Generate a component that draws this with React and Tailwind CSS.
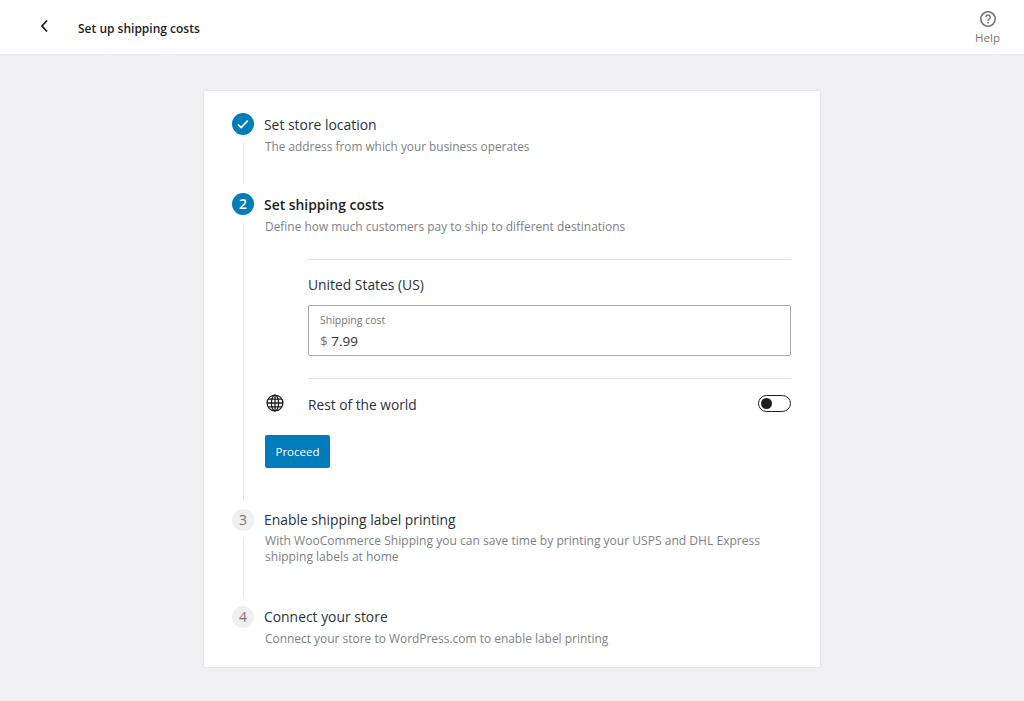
function Circle({ kind, children }) {
  const cls = kind === "active"
    ? "bg-[#007cba] text-white font-semibold"
    : "bg-[#f0f0f1] text-[#757575]";
  return (
    <div className={"flex h-[22px] w-[22px] shrink-0 items-center justify-center rounded-full text-[14px] leading-none " + cls}>
      {children}
    </div>
  );
}

function Step({ circle, kind, title, bold, desc, size, line = true, children, pt = "", pb = "pb-[40px]" }) {
  return (
    <div className="flex gap-[10px]">
      <div className="flex w-[22px] shrink-0 flex-col items-center">
        <Circle kind={kind}>{circle}</Circle>
        {line && <div className="mb-[9px] mt-[7px] w-px grow bg-[#e8e8ea]" />}
      </div>
      <div className={"min-w-0 grow " + pt + " " + pb}>
        <div className={"h-[22px] text-[13.9px] leading-[22px] " + (bold ? "font-semibold text-[#1e1e1e]" : "text-[#2c3338]")}>{title}</div>
        <div className={"mt-[2px] pl-px leading-[16.5px] text-[#808285] " + size}>{desc}</div>
        {children}
      </div>
    </div>
  );
}

function Globe() {
  return (
    <svg width="18" height="18" viewBox="0 0 18 18" fill="none" stroke="#1e1e1e" strokeWidth="1.3">
      <circle cx="9" cy="9" r="7.9" />
      <ellipse cx="9" cy="9" rx="3.6" ry="7.9" />
      <path d="M9 1v16M1 9h16M2 5.2h14M2 12.8h14" />
    </svg>
  );
}

export default function App() {
  return (
    <div className="flex min-h-[701px] flex-col bg-[#f0f0f2] font-['Open_Sans','Noto_Sans',sans-serif]">
      <header className="flex h-[55px] shrink-0 items-center justify-between border-b border-[#ececee] bg-white pl-[36px] pr-[24px]">
        <div className="flex items-center">
          <svg width="18" height="18" viewBox="0 0 18 18" fill="none" stroke="#1e1e1e" strokeWidth="1.8" className="mb-[2px]">
            <path d="M11 3.5 6 9l5 5.5" />
          </svg>
          <span className="ml-[24px] mt-[3px] text-[12px] font-semibold text-[#1e1e1e]">Set up shipping costs</span>
        </div>
        <div className="mt-[2px] flex flex-col items-center text-[#757575]">
          <svg width="18" height="18" viewBox="0 0 18 18" fill="none" stroke="#757575">
            <circle cx="9" cy="9" r="7.2" strokeWidth="1.6" />
            <path d="M6.8 7.2a2.2 2.2 0 1 1 3.4 1.9c-.8.5-1.2.9-1.2 1.7" strokeWidth="1.5" />
            <path d="M9 12v1.6" strokeWidth="1.6" />
          </svg>
          <span className="mt-[2px] text-[11.5px] leading-[16px]">Help</span>
        </div>
      </header>

      <main className="flex justify-center pt-[35px]">
        <div className="w-[618px] rounded-[2px] border border-[#e6e6e9] bg-white pb-[21px] pl-[28px] pr-[29px] pt-[22px]">
          <Step
            kind="active"
            circle={
              <svg width="16" height="16" viewBox="0 0 16 16" fill="none" stroke="#fff" strokeWidth="1.7">
                <path d="m3 8.4 3.2 3.2 6.6-7" />
              </svg>
            }
            title="Set store location"
            desc="The address from which your business operates"
            size="text-[11.85px]"
            pt="pt-px"
            pb="pb-[38.5px]"
          />
          <Step kind="active" circle="2" title="Set shipping costs" bold desc="Define how much customers pay to ship to different destinations" size="text-[11.93px]" pt="pt-px" pb="pb-[41px]">
            <div className="mt-[24px] pl-[44px]">
              <div className="border-t border-[#e2e2e4] pt-[14px] text-[13.85px] leading-[22px] text-[#2c3338]">United States (US)</div>
              <div className="mt-[9px] h-[51px] rounded-[2px] border border-[#a7aaad] pl-[11px] pt-[7px]">
                <div className="h-[14px] overflow-hidden text-[10.5px] leading-[15px] text-[#757575]">Shipping cost</div>
                <div className="mt-[4px] text-[13.5px] leading-[20px] text-[#2c3338]">
                  <span className="text-[#757575]">$</span> 7.99
                </div>
              </div>
              <div className="mt-[22px] border-t border-[#e2e2e4]" />
            </div>
            <div className="mt-[15px] flex h-[22px] items-center">
              <div className="mb-[3px] flex w-[44px] shrink-0 pl-[2px]"><Globe /></div>
              <span className="pt-[2px] text-[13.75px] text-[#2c3338]">Rest of the world</span>
              <div className="mb-[2px] ml-auto flex h-[17px] w-[33px] items-center rounded-full border border-[#1e1e1e] pl-[2px]">
                <div className="h-[11px] w-[11px] rounded-full bg-[#1e1e1e]" />
              </div>
            </div>
            <button className="ml-px mt-[19px] flex h-[33px] w-[65px] items-center justify-center rounded-[2px] bg-[#007cba] pt-[2px] text-[11.5px] text-white">Proceed</button>
          </Step>
          <Step
            circle="3"
            title="Enable shipping label printing"
            desc={<>With WooCommerce Shipping you can save time by printing your USPS and DHL Express<br />shipping labels at home</>}
            size="text-[12.07px]"
          />
          <Step circle="4" title="Connect your store" desc="Connect your store to WordPress.com to enable label printing" size="text-[11.94px]" line={false} pb="pb-0" />
        </div>
      </main>
    </div>
  );
}
